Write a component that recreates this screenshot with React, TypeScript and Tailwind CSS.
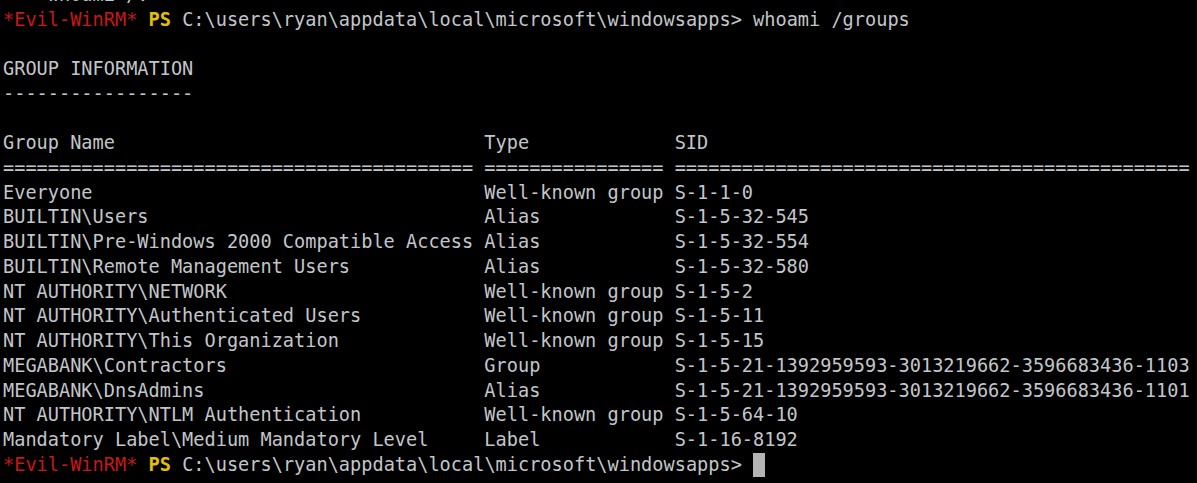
import React from "react";

const groups: [string, string, string][] = [
  ["Everyone", "Well-known group", "S-1-1-0"],
  ["BUILTIN\\Users", "Alias", "S-1-5-32-545"],
  ["BUILTIN\\Pre-Windows 2000 Compatible Access", "Alias", "S-1-5-32-554"],
  ["BUILTIN\\Remote Management Users", "Alias", "S-1-5-32-580"],
  ["NT AUTHORITY\\NETWORK", "Well-known group", "S-1-5-2"],
  ["NT AUTHORITY\\Authenticated Users", "Well-known group", "S-1-5-11"],
  ["NT AUTHORITY\\This Organization", "Well-known group", "S-1-5-15"],
  ["MEGABANK\\Contractors", "Group", "S-1-5-21-1392959593-3013219662-3596683436-1103"],
  ["MEGABANK\\DnsAdmins", "Alias", "S-1-5-21-1392959593-3013219662-3596683436-1101"],
  ["NT AUTHORITY\\NTLM Authentication", "Well-known group", "S-1-5-64-10"],
  ["Mandatory Label\\Medium Mandatory Level", "Label", "S-1-16-8192"],
];

const row = (a: string, b: string, c: string) => a.padEnd(43) + b.padEnd(17) + c;

const Prompt = ({ cursor }: { cursor?: boolean }) => (
  <div className="flex items-center">
    <span className="text-[#c81818]">*Evil-WinRM*</span>
    <span> </span>
    <span className="font-bold text-[#e3c000]">PS</span>
    <span> C:\users\ryan\appdata\local\microsoft\windowsapps&gt; </span>
    {cursor ? <span className="inline-block w-[12px] h-[24px] bg-[#b4b4b4]" /> : <span>whoami /groups</span>}
  </div>
);

export default function App() {
  return (
    <div className="w-[1197px] h-[483px] bg-black overflow-hidden">
      <div
        className="-mt-[17px] pl-[3px] text-[#c2c6ca] text-[18.6px] leading-[24.72px] whitespace-pre"
        style={{ fontFamily: '"DejaVu Sans Mono", monospace' }}
      >
        <div>    whoami /.</div>
        <Prompt />
        <div> </div>
        <div>GROUP INFORMATION</div>
        <div>-----------------</div>
        <div> </div>
        <div>{row("Group Name", "Type", "SID")}</div>
        <div>{row("=".repeat(42), "=".repeat(16), "=".repeat(46))}</div>
        {groups.map((g) => (
          <div key={g[0]}>{row(g[0], g[1], g[2])}</div>
        ))}
        <Prompt cursor />
      </div>
    </div>
  );
}
